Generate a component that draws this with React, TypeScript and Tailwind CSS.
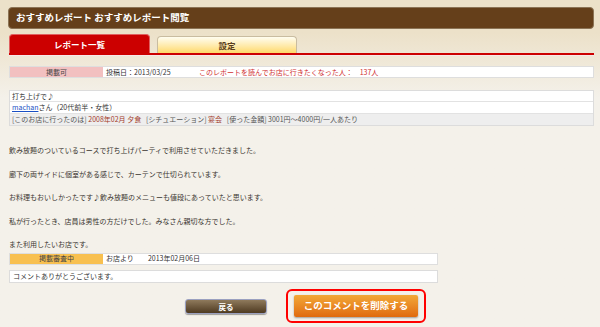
import React from 'react'

const font = { fontFamily: '"Noto Sans CJK JP", "Noto Sans", sans-serif' }

const paragraphs = [
  '飲み放題のついているコースで打ち上げパーティで利用させていただきました。',
  '廊下の両サイドに個室がある感じで、カーテンで仕切られています。',
  'お料理もおいしかったです♪飲み放題のメニューも値段にあっていたと思います。',
  '私が行ったとき、店員は男性の方だけでした。みなさん親切な方でした。',
  'また利用したいお店です。',
]

export default function App() {
  return (
    <div
      className="min-h-screen w-full bg-linear-to-b from-[#ece1c9] from-10% to-[#f4f1ea] to-30% px-[8px] pt-[7px] text-[7px] leading-none text-[#333]"
      style={font}
    >
      <div className="w-[586px]">
        {/* header */}
        <div className="flex h-[22px] items-center rounded-[4px] border border-[#8b7355] bg-[#653f1a] pl-[7px] text-[9.5px] font-bold text-white">
          おすすめレポート おすすめレポート閲覧
        </div>

        {/* tabs */}
        <div className="mt-[5px] flex items-end gap-[7px] pl-[1px]">
          <div className="flex h-[19px] w-[141px] items-center justify-center rounded-t-[4px] border border-b-0 border-[#e06060] bg-[#cc0000] text-[8.5px] font-bold text-white">
            レポート一覧
          </div>
          <div className="flex h-[17px] w-[140px] items-center justify-center rounded-t-[4px] border border-b-0 border-[#c9bca0] bg-linear-to-b from-[#fffdf0] to-[#ffd966] text-[8.5px] font-bold text-[#5a3d1c]">
            設定
          </div>
        </div>
        <div className="ml-[1px] h-[3px] border-b border-[#f8e8e8] bg-[#cc0000]" />

        {/* status row */}
        <div className="ml-[1px] mt-[10px] flex h-[12px] border border-[#dedede] bg-white">
          <div className="flex w-[93px] items-center justify-center bg-[#f2c0c0] text-[#444]">掲載可</div>
          <div className="flex items-center pl-[3px]">
            <span className="w-[93px]">投稿日：2013/03/25</span>
            <span className="text-[#d03030]">このレポートを読んでお店に行きたくなった人：　137人</span>
          </div>
        </div>

        {/* report box */}
        <div className="ml-[1px] mt-[12px] border border-[#dcdcdc] bg-white">
          <div className="flex h-[11px] items-center border-b border-[#e2e2e2] pl-[2px]">打ち上げで♪</div>
          <div className="flex h-[12px] items-center border-b border-[#e2e2e2] pl-[2px]">
            <span className="text-[#1a4fc4] underline">machan</span>さん（20代前半・女性）
          </div>
          <div className="flex h-[11px] items-center bg-[#eeeeee] pl-[2px] text-[#555]">
            [このお店に行ったのは]&nbsp;<span className="text-[#a33a2a]">2008年02月 夕食</span>
            &nbsp;&nbsp;&nbsp;[シチュエーション]&nbsp;<span className="text-[#a33a2a]">宴会</span>
            &nbsp;&nbsp;&nbsp;[使った金額]&nbsp;3001円～4000円/一人あたり
          </div>
        </div>

        {/* body */}
        <div className="mt-[19px] pl-[1px] leading-[11.75px] text-[#3a3530]">
          {paragraphs.map((p, i) => (
            <div key={i} className={i < paragraphs.length - 1 ? 'mb-[11.75px]' : ''}>
              {p}
            </div>
          ))}
        </div>

        {/* shop reply */}
        <div className="ml-[1px] mt-[2px] flex h-[12px] w-[429px] border border-[#dedede] bg-white">
          <div className="flex w-[93px] items-center justify-center bg-[#f8c050] text-[#444]">掲載審査中</div>
          <div className="flex items-center pl-[3px]">
            お店より<span className="ml-[14px]">2013年02月06日</span>
          </div>
        </div>
        <div className="ml-[1px] mt-[5px] flex h-[13px] w-[429px] items-center border border-[#dcdcdc] bg-white pl-[3px]">
          コメントありがとうございます。
        </div>

        {/* buttons */}
        <div className="mt-[6px] flex items-center pl-[177px]">
          <button className="mt-[1px] flex h-[15px] w-[82px] items-center justify-center rounded-[3px] border border-[#9aa0c0] bg-linear-to-b from-[#8f7a5c] to-[#4f3b22] text-[7.5px] font-bold text-white shadow-[0_1px_1px_rgba(0,0,0,0.35)]">
            戻る
          </button>
          <div className="ml-[19px] rounded-[6px] border-[2.5px] border-[#ff0000] px-[6px] py-[4px]">
            <button className="flex h-[22px] w-[124px] items-center justify-center rounded-[2px] bg-linear-to-b from-[#f2a836] to-[#e06a0c] text-[9.5px] font-bold text-white shadow-[0_1px_2px_rgba(0,0,0,0.35)]">
              このコメントを削除する
            </button>
          </div>
        </div>
      </div>
    </div>
  )
}
